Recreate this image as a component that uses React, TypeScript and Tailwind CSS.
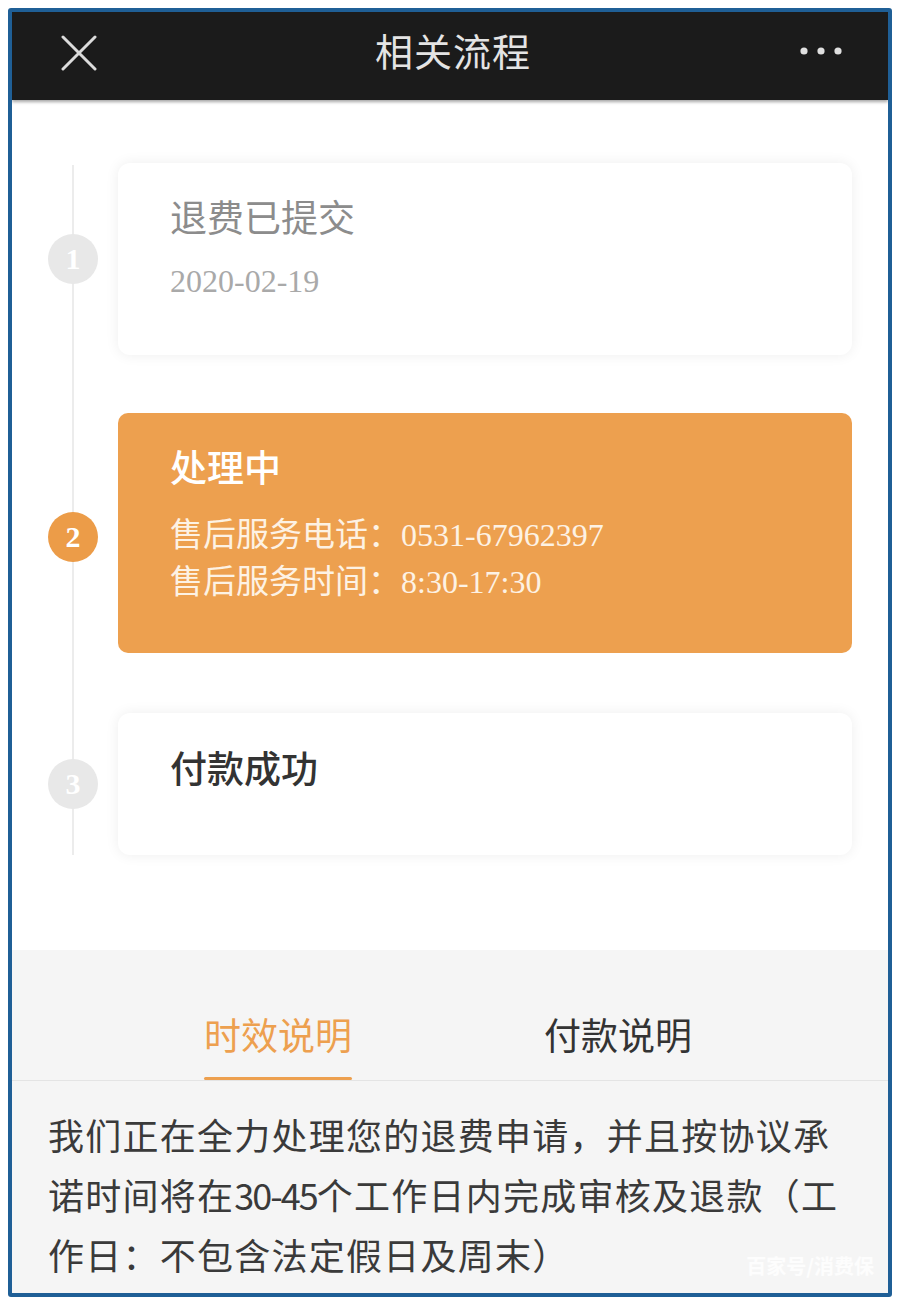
import React from "react";

const cjk = { fontFamily: '"Noto Sans CJK SC", "Noto Sans", sans-serif' };
const serif = { fontFamily: '"Liberation Serif", "Times New Roman", serif' };

function Circle({ n, active }: { n: number; active?: boolean }) {
  return (
    <div
      className={`w-[50px] h-[50px] rounded-full flex items-center justify-center text-white text-[30px] font-bold leading-none ${
        active ? "bg-[#ec9c48]" : "bg-[#e8e8e8]"
      }`}
      style={serif}
    >
      {n}
    </div>
  );
}

export default function App() {
  return (
    <div className="w-[900px] h-[1306px] bg-white pt-[8px] pl-[8px]" style={cjk}>
      <div className="w-[884px] h-[1289px] border-[4px] border-[#1f5f96] rounded-[3px] flex flex-col overflow-hidden bg-white">
        {/* Header */}
        <div className="h-[88px] bg-[#1b1b1b] flex items-center justify-between pl-[48px] pr-[45px] shadow-[0_2px_3px_rgba(0,0,0,0.35)] relative z-10 shrink-0">
          <svg width="36" height="36" viewBox="0 0 36 36" className="mt-[-6px] ml-[1px]">
            <path d="M2 2 L34 34 M34 2 L2 34" stroke="#dcdcdc" strokeWidth="3" strokeLinecap="round" />
          </svg>
          <div className="text-[38px] tracking-[1px] text-[#e4e4e4] leading-none mt-[-12px] ml-[10px]" style={cjk}>
            相关流程
          </div>
          <svg width="44" height="10" viewBox="0 0 44 10" className="mt-[-10px]">
            <circle cx="5" cy="5" r="3.6" fill="#e0e0e0" />
            <circle cx="22" cy="5" r="3.6" fill="#e0e0e0" />
            <circle cx="39" cy="5" r="3.6" fill="#e0e0e0" />
          </svg>
        </div>

        {/* Timeline */}
        <div className="h-[850px] bg-white relative pt-[63px] shrink-0">
          <div className="absolute left-[60px] top-[65px] w-[2px] h-[690px] bg-[#ececec]" />
          <div className="flex flex-col gap-[58px] relative">
            <div className="flex items-center">
              <div className="w-[106px] pl-[36px] flex items-center">
                <Circle n={1} />
              </div>
              <div className="w-[734px] h-[192px] bg-white rounded-[12px] shadow-[0_0_14px_rgba(0,0,0,0.07)] pl-[52px] pt-[31px]">
                <div className="text-[37px] leading-[44px] text-[#8c8c8c]">退费已提交</div>
                <div className="text-[32px] leading-[40px] text-[#a9a9a9] mt-[23px]" style={serif}>
                  2020-02-19
                </div>
              </div>
            </div>

            <div className="flex items-center">
              <div className="w-[106px] pl-[36px] flex items-center mt-[8px]">
                <Circle n={2} active />
              </div>
              <div className="w-[734px] h-[240px] bg-[#eda04f] rounded-[10px] pl-[52px] pt-[31px]">
                <div className="text-[37px] leading-[44px] text-white font-medium">处理中</div>
                <div className="mt-[21px] text-[33px] leading-[47px] text-[#fdf2e4] whitespace-nowrap">
                  <div className="h-[47px]">
                    售后服务电话：<span className="text-[32px] leading-[47px]" style={serif}>0531-67962397</span>
                  </div>
                  <div className="h-[47px]">
                    售后服务时间：<span className="text-[32px] leading-[47px]" style={serif}>8:30-17:30</span>
                  </div>
                </div>
              </div>
            </div>

            <div className="flex items-center mt-[2px]">
              <div className="w-[106px] pl-[36px] flex items-center">
                <Circle n={3} />
              </div>
              <div className="w-[734px] h-[142px] bg-white rounded-[12px] shadow-[0_0_14px_rgba(0,0,0,0.07)] pl-[52px] pt-[32px]">
                <div className="text-[37px] leading-[44px] text-[#333333] font-medium">付款成功</div>
              </div>
            </div>
          </div>
        </div>

        {/* Bottom */}
        <div className="flex-1 bg-[#f5f5f5] relative">
          <div className="flex justify-center gap-[192px] pt-[62px] border-b border-[#e4e4e4] ml-[-4px]">
            <div className="flex flex-col items-center">
              <div className="text-[37px] leading-[44px] text-[#eda04f] whitespace-nowrap">时效说明</div>
              <div className="w-[148px] h-[3px] bg-[#eda04f] mt-[21px] rounded-full" />
            </div>
            <div className="flex flex-col items-center">
              <div className="text-[37px] leading-[44px] text-[#333333] whitespace-nowrap">付款说明</div>
              <div className="w-[146px] h-[3px] mt-[21px]" />
            </div>
          </div>
          <div className="pl-[36px] pt-[23px] text-[36px] leading-[60px] text-[#3a3a3a] tracking-[1.25px] whitespace-nowrap">
            <div>我们正在全力处理您的退费申请，并且按协议承</div>
            <div>
              诺时间将在<span className="tracking-[-2px]">30-45</span>个工作日内完成审核及退款（工
            </div>
            <div>作日：不包含法定假日及周末）</div>
          </div>
          <div className="absolute right-[14px] bottom-[12px] text-[20px] text-white/80 font-bold">
            百家号/消费保
          </div>
        </div>
      </div>
    </div>
  );
}
